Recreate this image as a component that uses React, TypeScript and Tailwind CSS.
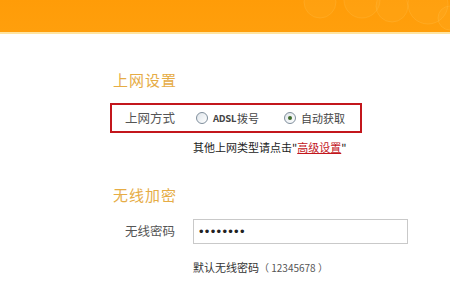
import React from 'react'

const cjk = { fontFamily: '"Noto Sans CJK SC", "Liberation Sans", sans-serif' }

function Radio({ checked }: { checked?: boolean }) {
  return (
    <span className="w-[12px] h-[12px] rounded-full border border-[#7f8e9c] bg-gradient-to-br from-[#dfe5ea] to-white flex items-center justify-center">
      {checked && <span className="w-[4px] h-[4px] rounded-full bg-[#3d6b2a]" />}
    </span>
  )
}

export default function App() {
  return (
    <div className="w-[450px] h-[286px] bg-white overflow-hidden" style={cjk}>
      {/* top bar */}
      <div className="h-[32px] bg-gradient-to-b from-[#ff9c08] to-[#ff9f0c] relative overflow-hidden">
        <svg className="absolute right-0 top-0" width="150" height="32" viewBox="0 0 150 32">
          <g fill="#ffc24a" fillOpacity="0.1" stroke="#ffd070" strokeOpacity="0.18">
            <circle cx="20" cy="2" r="16" />
            <circle cx="62" cy="0" r="18" />
            <circle cx="92" cy="6" r="16" />
            <circle cx="128" cy="4" r="20" />
            <circle cx="150" cy="18" r="12" />
          </g>
        </svg>
      </div>
      <div className="h-[2px] bg-[#ffe4a0]" />

      <div className="pl-[113px]">
        <div className="mt-[36px] text-[15px] leading-[20px] tracking-[1px] text-[#e6ac45]">上网设置</div>

        <div className="mt-[13px] -ml-[3px] w-[252px] h-[30px] border-2 border-[#c3161c] flex items-center pl-[13px] text-[12.5px] text-[#555]">
          <span className="w-[71px]">上网方式</span>
          <Radio />
          <span className="ml-[5px] text-[11px] text-[#444] flex items-center">
            <span className="text-[9.5px] font-bold tracking-[-0.3px] mr-[1px]">ADSL</span>拨号
          </span>
          <span className="ml-[25px]"><Radio checked /></span>
          <span className="ml-[5px] text-[11px] text-[#444]">自动获取</span>
        </div>

        <div className="mt-[6px] ml-[80px] text-[11px] leading-[16px] text-[#222]">
          其他上网类型请点击"<span className="text-[#c3161c] underline">高级设置</span>"
        </div>

        <div className="mt-[30px] text-[15px] leading-[20px] tracking-[1px] text-[#e6ac45]">无线加密</div>

        <div className="mt-[14px] flex items-center">
          <span className="w-[80px] pl-[12px] text-[12.5px] text-[#555]">无线密码</span>
          <div
            className="w-[215px] h-[25px] border border-[#c9c9c9] flex items-center pl-[5px] text-[13px] tracking-[1.3px] text-[#222]"
            style={{ fontFamily: '"Liberation Sans", sans-serif' }}
          >
            ••••••••
          </div>
        </div>

        <div className="mt-[15px] ml-[80px] text-[11px] leading-[16px] text-[#333]">
          默认无线密码<span className="text-[10px] text-[#555]">（ 12345678 ）</span>
        </div>
      </div>
    </div>
  )
}
